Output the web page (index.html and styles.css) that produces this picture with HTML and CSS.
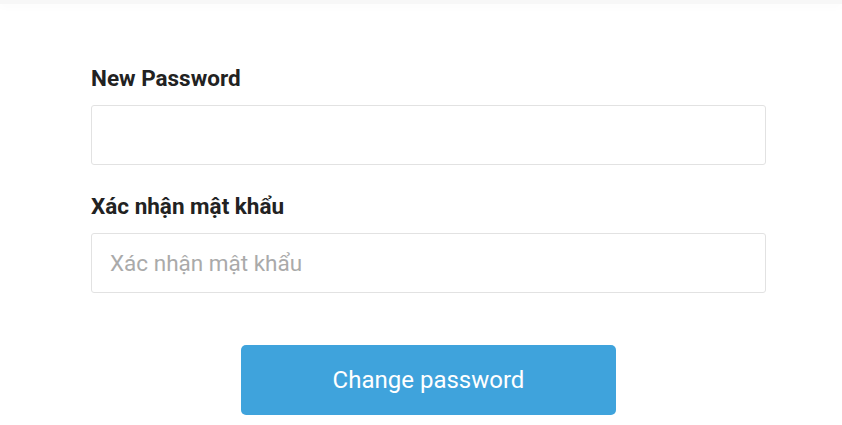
FILE: index.html
```html
<!DOCTYPE html>
<html lang="vi">
<head>
<meta charset="utf-8">
<link rel="stylesheet" href="styles.css">
</head>
<body>
<div class="topbar"></div>
<form class="form">
  <div class="field">
    <label class="label">New Password</label>
    <input class="input" type="password">
  </div>
  <div class="field">
    <label class="label">Xác nhận mật khẩu</label>
    <input class="input" type="password" placeholder="Xác nhận mật khẩu">
  </div>
  <div class="actions">
    <button class="btn" type="button">Change password</button>
  </div>
</form>
</body>
</html>
```
FILE: styles.css
```css
* { box-sizing: border-box; }
html, body { margin: 0; padding: 0; background: #fff; }
body { font-family: Roboto, "Noto Sans", Arial, sans-serif; color: #222; }
.topbar {
  height: 4px;
  background: #f7f7f7;
  box-shadow: 0 2px 8px rgba(0,0,0,0.03);
}
.form {
  width: 675px;
  margin-left: 91px;
  padding-top: 60px;
}
.field { display: flex; flex-direction: column; }
.field + .field { margin-top: 27px; }
.label {
  font-size: 22.5px;
  font-weight: 700;
  line-height: 28px;
  color: #222;
  margin-bottom: 13px;
}
.input {
  height: 60px;
  border: 1px solid #e2e2e2;
  border-radius: 3px;
  padding: 0 18px;
  font-family: inherit;
  font-size: 22.5px;
  color: #333;
  outline: none;
}
.input::placeholder { color: #aaa; }
.actions { display: flex; justify-content: center; margin-top: 52px; }
.btn {
  width: 375px;
  height: 70px;
  background: #3fa3dc;
  border: none;
  border-radius: 5px;
  color: #fff;
  font-family: inherit;
  font-size: 24px;
}
```
